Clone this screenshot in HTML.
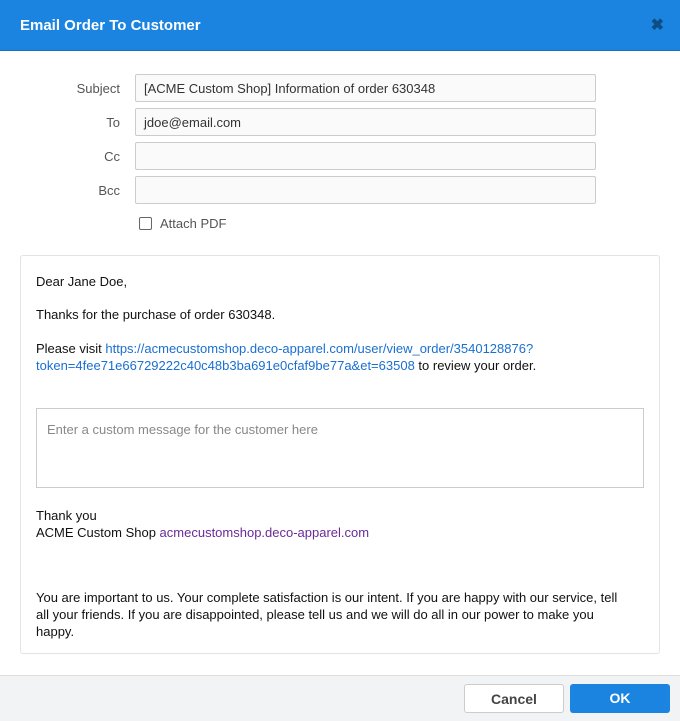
<!DOCTYPE html>
<html><head><style>
*{box-sizing:border-box;margin:0;padding:0}
body{width:680px;height:721px;background:#fff;font-family:"Liberation Sans",sans-serif;position:relative;overflow:hidden;color:#222}
.hd{position:absolute;left:0;top:0;width:680px;height:51px;background:#1a84e0;color:#fff;font-weight:bold;font-size:15px;padding:17px 0 0 20px;border-bottom:1px solid #1670c0}
.x{position:absolute;right:16px;top:15px;color:#0d4d85;font-size:16px;font-weight:bold}
.lb{position:absolute;left:40px;width:80px;text-align:right;font-size:13px;color:#555}
.in{position:absolute;left:135px;width:461px;height:28px;border:1px solid #ccc;border-radius:2px;background:#fafafa;font-size:13px;padding:6px 8px;color:#333}
.cb{position:absolute;left:139px;top:217px;width:13px;height:13px;border:1.5px solid #666;border-radius:2px}
.panel{position:absolute;left:20px;top:255px;width:640px;height:399px;border:1px solid #e3e3e3;border-radius:3px;font-size:13px;line-height:17px;color:#111}
.t{position:absolute;left:15px;white-space:nowrap}
a{color:#1a6fd0;text-decoration:none}
.ta{position:absolute;left:15px;top:152px;width:608px;height:80px;border:1px solid #ccc;color:#888;padding:12px 10px}
.ft{position:absolute;left:0;top:675px;width:680px;height:46px;background:#f2f3f5;border-top:1px solid #ddd}
.btn{position:absolute;top:684px;height:29px;width:100px;border-radius:3px;font-size:14px;font-weight:bold;text-align:center;line-height:29px}
</style></head><body>
<div class="hd">Email Order To Customer<span class="x">✖</span></div>
<div class="lb" style="top:81px">Subject</div><div class="in" style="top:74px">[ACME Custom Shop] Information of order 630348</div>
<div class="lb" style="top:115px">To</div><div class="in" style="top:108px">jdoe@email.com</div>
<div class="lb" style="top:149px">Cc</div><div class="in" style="top:142px"></div>
<div class="lb" style="top:183px">Bcc</div><div class="in" style="top:176px"></div>
<div class="cb"></div><div style="position:absolute;left:160px;top:216px;font-size:13px;color:#555">Attach PDF</div>
<div class="panel">
<div class="t" style="top:17px">Dear Jane Doe,</div>
<div class="t" style="top:50px">Thanks for the purchase of order 630348.</div>
<div class="t" style="top:84px">Please visit <a>https://acmecustomshop.deco-apparel.com/user/view_order/3540128876?</a><br><a>token=4fee71e66729222c40c48b3ba691e0cfaf9be77a&amp;et=63508</a> to review your order.</div>
<div class="ta">Enter a custom message for the customer here</div>
<div class="t" style="top:251px">Thank you<br>ACME Custom Shop <a style="color:#6a2a9a">acmecustomshop.deco-apparel.com</a></div>
<div class="t" style="top:333px">You are important to us. Your complete satisfaction is our intent. If you are happy with our service, tell<br>all your friends. If you are disappointed, please tell us and we will do all in our power to make you<br>happy.</div>
</div>
<div class="ft"></div>
<div class="btn" style="left:464px;background:#fff;border:1px solid #ccc;color:#444">Cancel</div>
<div class="btn" style="left:570px;background:#1a84e0;color:#fff">OK</div>
</body></html>
